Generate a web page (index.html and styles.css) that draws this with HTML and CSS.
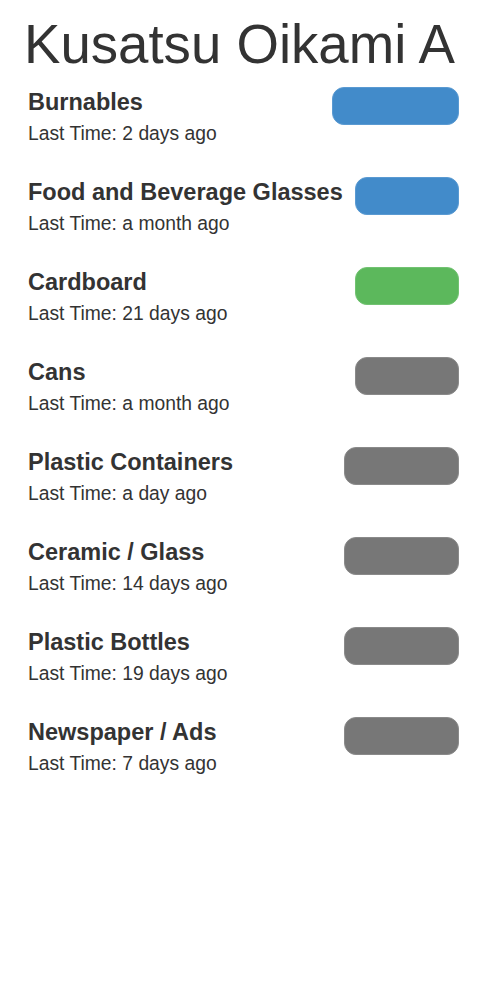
FILE: index.html
```html
<!DOCTYPE html>
<html lang="en">
<head>
<meta charset="utf-8">
<title>Kusatsu Oikami A</title>
<link rel="stylesheet" href="styles.css">
</head>
<body>
<main class="page">
  <h1 class="page-title">Kusatsu Oikami A</h1>
  <ul class="list">
    <li class="item">
      <div class="info"><h2 class="name">Burnables</h2><p class="last">Last Time: 2 days ago</p></div>
      <button class="pill pill-blue pill-lg" type="button"></button>
    </li>
    <li class="item">
      <div class="info"><h2 class="name">Food and Beverage Glasses</h2><p class="last">Last Time: a month ago</p></div>
      <button class="pill pill-blue pill-sm" type="button"></button>
    </li>
    <li class="item">
      <div class="info"><h2 class="name">Cardboard</h2><p class="last">Last Time: 21 days ago</p></div>
      <button class="pill pill-green pill-sm" type="button"></button>
    </li>
    <li class="item">
      <div class="info"><h2 class="name">Cans</h2><p class="last">Last Time: a month ago</p></div>
      <button class="pill pill-gray pill-sm" type="button"></button>
    </li>
    <li class="item">
      <div class="info"><h2 class="name">Plastic Containers</h2><p class="last">Last Time: a day ago</p></div>
      <button class="pill pill-gray pill-md" type="button"></button>
    </li>
    <li class="item">
      <div class="info"><h2 class="name">Ceramic / Glass</h2><p class="last">Last Time: 14 days ago</p></div>
      <button class="pill pill-gray pill-md" type="button"></button>
    </li>
    <li class="item">
      <div class="info"><h2 class="name">Plastic Bottles</h2><p class="last">Last Time: 19 days ago</p></div>
      <button class="pill pill-gray pill-md" type="button"></button>
    </li>
    <li class="item">
      <div class="info"><h2 class="name">Newspaper / Ads</h2><p class="last">Last Time: 7 days ago</p></div>
      <button class="pill pill-gray pill-md" type="button"></button>
    </li>
  </ul>
</main>
</body>
</html>
```

FILE: styles.css
```css
html, body {
  margin: 0;
  padding: 0;
  background: #fff;
}

body {
  font-family: "Liberation Sans", Arial, Helvetica, sans-serif;
  color: #333;
}

.page {
  padding: 15px 41px 0 28px;
}

.page-title {
  margin: 0 0 0 -4px;
  font-size: 54.6px;
  font-weight: 400;
  line-height: 59px;
}

.list {
  list-style: none;
  margin: 13px 0 0;
  padding: 0;
  display: flex;
  flex-direction: column;
}

.item {
  display: flex;
  justify-content: space-between;
  align-items: flex-start;
  height: 90px;
}

.info {
  padding-top: 3px;
}

.name {
  margin: 0;
  font-size: 23.5px;
  font-weight: 700;
  line-height: 25px;
}

.last {
  margin: 5px 0 0;
  font-size: 19.3px;
  line-height: 27px;
}

.pill {
  flex: none;
  height: 38px;
  border-radius: 12px;
  border: 1px solid transparent;
  padding: 0;
  margin: 0;
}

.pill-lg { width: 127px; }
.pill-md { width: 115px; }
.pill-sm { width: 104px; }

.pill-blue {
  background: #428bca;
  border-color: #5a9ad2;
}

.pill-green {
  background: #5cb85c;
  border-color: #72c272;
}

.pill-gray {
  background: #777;
  border-color: #8a8a8a;
}
```
